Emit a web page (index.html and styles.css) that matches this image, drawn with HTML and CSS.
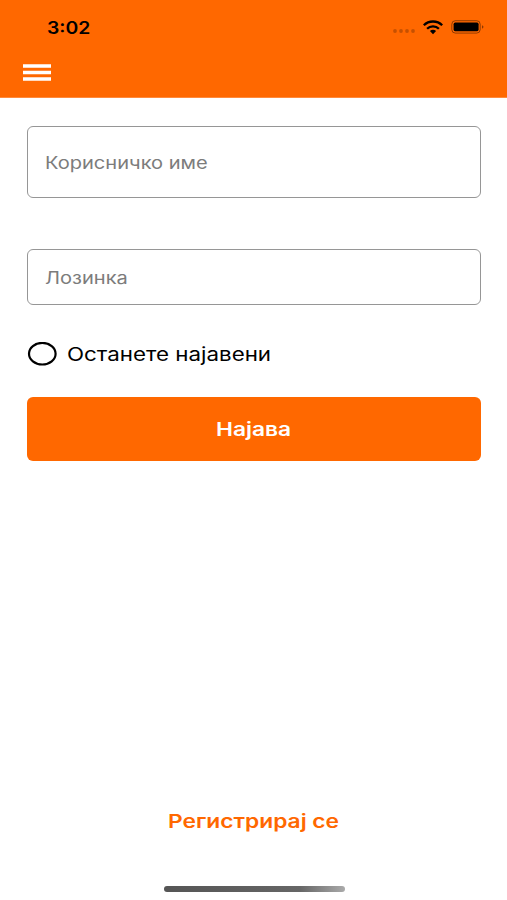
FILE: index.html
```html
<!DOCTYPE html>
<html lang="mk">
<head>
<meta charset="utf-8">
<title>Најава</title>
<link rel="stylesheet" href="styles.css">
</head>
<body>
<header class="header">
  <div class="status">
    <span class="time wide">3:02</span>
    <div class="indicators">
      <svg class="dots" width="24" height="6" viewBox="0 0 24 6"><g fill="#000" opacity=".22"><circle cx="3" cy="3" r="1.9"/><circle cx="9" cy="3" r="1.9"/><circle cx="15" cy="3" r="1.9"/><circle cx="21" cy="3" r="1.9"/></g></svg>
      <svg class="wifi" width="20" height="15" viewBox="0 0 20 15"><g fill="none" stroke="#000" stroke-width="2.3"><path d="M.8 5.3C5.8.2 14.2.2 19.2 5.3"/><path d="M4.1 8.8C7.2 5.6 12.8 5.6 15.9 8.8"/></g><path d="M6.9 11.1Q10 8.6 13.1 11.1L10 14.2Z"/></svg>
      <svg class="battery" width="34" height="14" viewBox="0 0 34 14"><rect x=".8" y=".7" width="28.4" height="12.4" rx="3.6" fill="none" stroke="#000" stroke-opacity=".42"/><rect x="2.6" y="2.6" width="25" height="8.6" rx="1.6"/><path d="M31 5.3Q34 7 31 8.7Z" opacity=".45"/></svg>
    </div>
  </div>
  <svg class="menu" width="28" height="17" viewBox="0 0 28 17"><path d="M0 2h28M0 8.4h28M0 14.9h28" stroke="#fff" stroke-width="3.5"/></svg>
</header>
<main class="form">
  <div class="field field-user"><span class="wide w-user">Корисничко име</span></div>
  <div class="field field-pass"><span class="wide w-pass">Лозинка</span></div>
  <label class="remember">
    <svg width="30" height="24" viewBox="0 0 30 24"><ellipse cx="15.3" cy="11.7" rx="13.3" ry="10.8" fill="#fff" stroke="#000" stroke-width="2.2"/></svg>
    <span class="wide w-remember">Останете најавени</span>
  </label>
  <button class="login"><span class="wide w-login">Најава</span></button>
</main>
<footer class="footer">
  <a class="register"><span class="wide w-register">Регистрирај се</span></a>
  <div class="home"></div>
</footer>
</body>
</html>
```
FILE: styles.css
```css
* { box-sizing: border-box; }
body {
  margin: 0;
  height: 900px;
  display: flex;
  flex-direction: column;
  background: #fff;
  font-family: Inter, "Liberation Sans", sans-serif;
  font-size: 17px;
  line-height: 20px;
  overflow: hidden;
}
svg { display: block; flex: none; }
.wide {
  display: inline-block;
  white-space: nowrap;
  transform: scaleX(1.18);
  transform-origin: left center;
}
.header {
  height: 98px;
  flex: none;
  background: #ff6800;
  border-bottom: 1px solid #ff8a3c;
}
.status {
  display: flex;
  justify-content: space-between;
  height: 64px;
  padding: 17px 22px 0 47px;
}
.time { font-weight: 600; height: 20px; margin-top: 1px; transform: scaleX(1.14); }
.indicators { display: flex; align-items: flex-start; }
.dots { margin: 11px 7px 0 0; }
.wifi { margin: 3px 8px 0 0; }
.battery { margin-top: 3px; }
.menu { margin-left: 23px; }
.form { padding: 28px 26px 0 27px; flex: 1; }
.field {
  display: flex;
  align-items: center;
  padding: 2px 0 0 17px;
  border: 1px solid #969696;
  border-radius: 6px;
  color: #7c7c7c;
}
.field-user { height: 72px; margin-bottom: 51px; }
.field-pass { height: 56px; }
.remember {
  display: flex;
  align-items: center;
  gap: 10px;
  height: 24px;
  margin: 37px 0 31px;
  color: #000;
  font-size: 18.5px;
}
.w-remember { transform: scaleX(1.207); }
.login {
  display: block;
  width: 100%;
  height: 64px;
  padding: 0;
  border: 0;
  border-radius: 6px;
  background: #ff6800;
  color: #fff;
  font: 600 18.5px/20px Inter, "Liberation Sans", sans-serif;
}
.w-login, .w-register { transform: scaleX(1.23); transform-origin: center; }
.footer {
  height: 89px;
  flex: none;
  display: flex;
  flex-direction: column;
  align-items: center;
}
.register { color: #ff6800; font-weight: 600; font-size: 18.5px; height: 20px; }
.home {
  width: 181px;
  height: 6px;
  margin-top: 55px;
  margin-left: 2px;
  border-radius: 3px;
  background: linear-gradient(90deg, #555 0, #666 75%, #aaa 100%);
}
```
